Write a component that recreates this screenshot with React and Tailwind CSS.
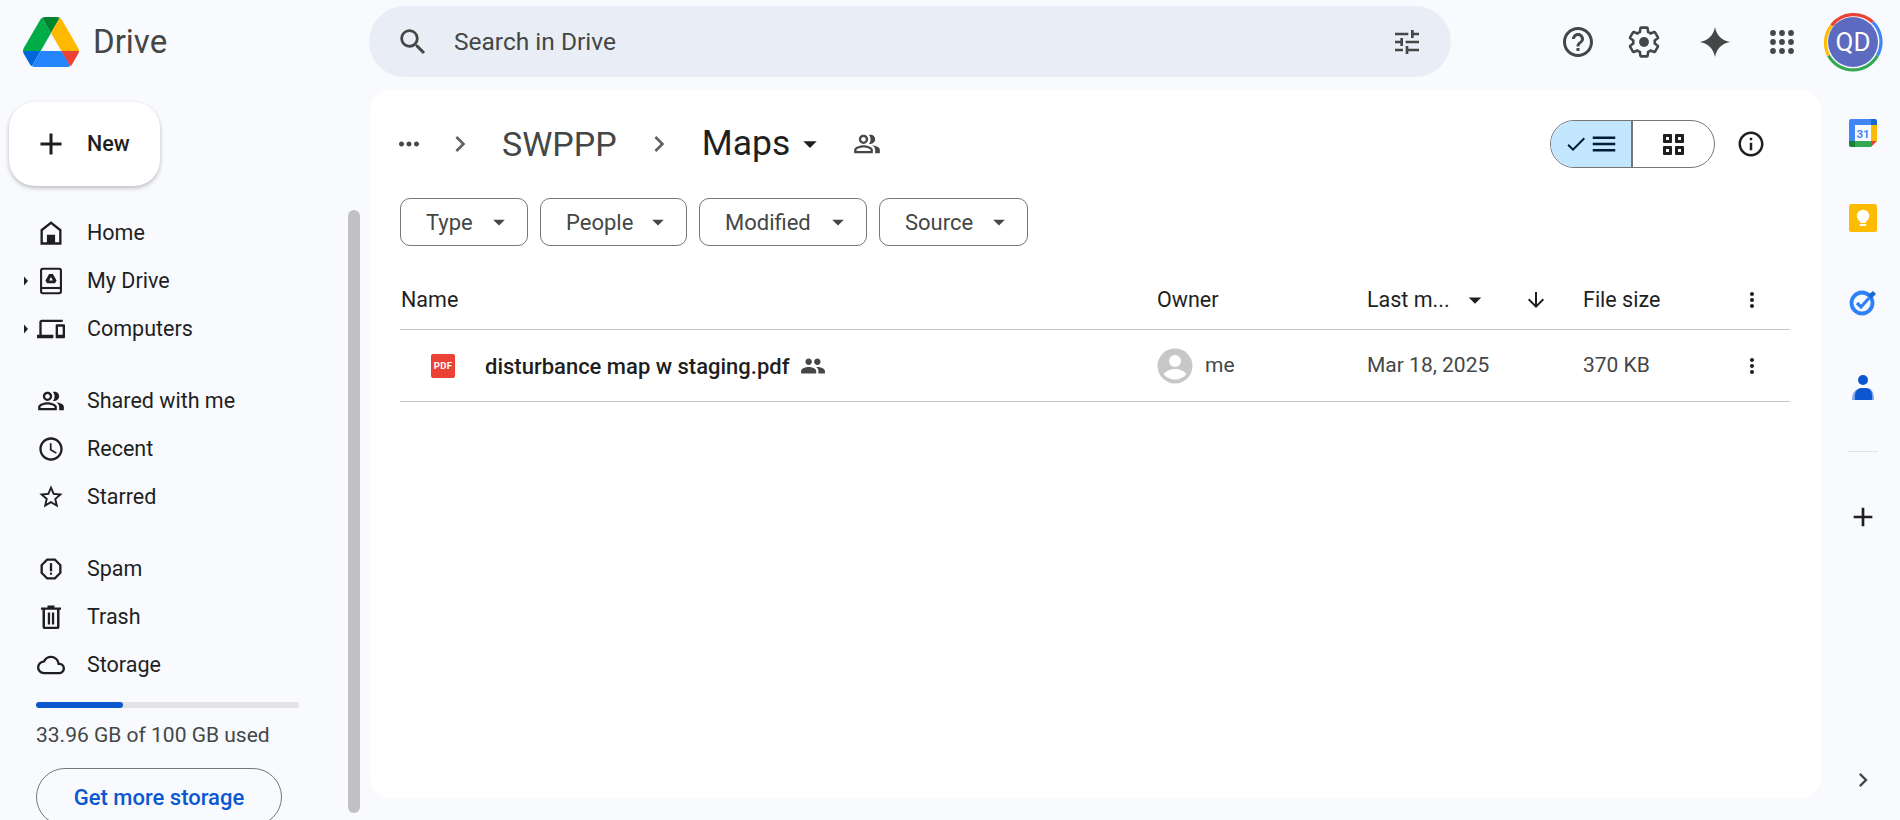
import React from 'react';
import {
  MdAdd, MdSearch, MdTune, MdHelpOutline, MdMoreHoriz, MdChevronRight,
  MdArrowDropDown, MdOutlinePeopleAlt, MdPeople, MdAccessTime, MdStarBorder, MdOutlineReport,
  MdOutlineCloud, MdOutlineDevices, MdInfoOutline, MdCheck, MdMenu, MdMoreVert,
  MdArrowDownward,
} from 'react-icons/md';

const font = 'font-["Roboto","Liberation_Sans",sans-serif]';

const DriveLogo = () => (
  <svg viewBox="0 0 87.3 78" className="w-[56px] h-[50px]">
    <path d="m6.6 66.85 3.85 6.65c.8 1.4 1.95 2.5 3.3 3.3l13.75-23.8h-27.5c0 1.55.4 3.1 1.2 4.5z" fill="#0066da" />
    <path d="m43.65 25-13.75-23.8c-1.35.8-2.5 1.9-3.3 3.3l-25.4 44a9.06 9.06 0 0 0 -1.2 4.5h27.5z" fill="#00ac47" />
    <path d="m73.55 76.8c1.35-.8 2.5-1.9 3.3-3.3l1.6-2.75 7.65-13.25c.8-1.4 1.2-2.95 1.2-4.5h-27.502l5.852 11.5z" fill="#ea4335" />
    <path d="m43.65 25 13.75-23.8c-1.35-.8-2.9-1.2-4.5-1.2h-18.5c-1.6 0-3.15.45-4.5 1.2z" fill="#00832d" />
    <path d="m59.8 53h-32.3l-13.75 23.8c1.35.8 2.9 1.2 4.5 1.2h50.8c1.6 0 3.15-.45 4.5-1.2z" fill="#2684fc" />
    <path d="m73.4 26.5-12.7-22c-.8-1.4-1.95-2.5-3.3-3.3l-13.75 23.8 16.15 28h27.45c0-1.55-.4-3.1-1.2-4.5z" fill="#ffba00" />
  </svg>
);

const HomeIcon = () => (
  <svg viewBox="0 0 24 24" className="w-[28px] h-[28px]" fill="#1f1f1f">
    <path fillRule="evenodd" d="M12 2 3 9v13h18V9L12 2zm0 2.5 7 5.5v10h-3.5v-6.5h-7V20H5V10l7-5.5z" />
  </svg>
);

const MyDriveIcon = () => (
  <svg viewBox="0 0 24 24" className="w-[28px] h-[28px]" fill="none">
    <path d="M5 1.5h14A1.5 1.5 0 0 1 20.5 3v18a1.5 1.5 0 0 1-1.5 1.5H5A1.5 1.5 0 0 1 3.5 21V3A1.5 1.5 0 0 1 5 1.5z" stroke="#1f1f1f" strokeWidth="1.8" />
    <path d="M4 18h16" stroke="#1f1f1f" strokeWidth="1.8" />
    <path fillRule="evenodd" d="M10.4 6h3.2l3.2 5.6-1.4 2.4H8.6l-1.4-2.4L10.4 6zm1.6 2.6-1.6 2.9h3.2L12 8.6z" fill="#1f1f1f" />
  </svg>
);

const TrashIcon = () => (
  <svg viewBox="0 0 28 28" className="w-[28px] h-[28px]" fill="#1f1f1f">
    <path fillRule="evenodd" d="M10.5 2.5h7v2H24v2.3h-1.5V24a2 2 0 0 1-2 2h-13a2 2 0 0 1-2-2V6.8H4V4.5h6.5v-2zM8 6.8v17h12v-17H8z" />
    <path d="M10.8 9.5h2.3v12h-2.3zM14.9 9.5h2.3v12h-2.3z" />
  </svg>
);

const GearIcon = () => (
  <svg viewBox="0 0 24 24" className="w-[36px] h-[36px]" fill="none">
    <path d="M19.14 12.94c.04-.3.06-.61.06-.94 0-.32-.02-.64-.07-.94l2.03-1.58c.18-.14.23-.41.12-.61l-1.92-3.32c-.12-.22-.37-.29-.59-.22l-2.39.96c-.5-.38-1.03-.7-1.62-.94l-.36-2.54c-.04-.24-.24-.41-.48-.41h-3.84c-.24 0-.43.17-.47.41l-.36 2.54c-.59.24-1.13.57-1.62.94l-2.39-.96c-.22-.08-.47 0-.59.22L2.74 8.87c-.12.21-.08.47.12.61l2.03 1.58c-.05.3-.09.63-.09.94s.02.64.07.94l-2.03 1.58c-.18.14-.23.41-.12.61l1.92 3.32c.12.22.37.29.59.22l2.39-.96c.5.38 1.03.7 1.62.94l.36 2.54c.05.24.24.41.48.41h3.84c.24 0 .44-.17.47-.41l.36-2.54c.59-.24 1.13-.56 1.62-.94l2.39.96c.22.08.47 0 .59-.22l1.92-3.32c.12-.22.07-.47-.12-.61l-2.01-1.58z" stroke="#444746" strokeWidth="1.7" />
    <circle cx="12" cy="12" r="3.3" fill="#444746" />
  </svg>
);

const GridIcon = () => (
  <svg viewBox="0 0 21 21" className="w-[21px] h-[21px]" fill="#1f1f1f">
    <path fillRule="evenodd" d="M1 0h7a1 1 0 0 1 1 1v7a1 1 0 0 1-1 1H1a1 1 0 0 1-1-1V1a1 1 0 0 1 1-1zm2 3v3h3V3H3zM13 0h7a1 1 0 0 1 1 1v7a1 1 0 0 1-1 1h-7a1 1 0 0 1-1-1V1a1 1 0 0 1 1-1zm2 3v3h3V3h-3zM1 12h7a1 1 0 0 1 1 1v7a1 1 0 0 1-1 1H1a1 1 0 0 1-1-1v-7a1 1 0 0 1 1-1zm2 3v3h3v-3H3zM13 12h7a1 1 0 0 1 1 1v7a1 1 0 0 1-1 1h-7a1 1 0 0 1-1-1v-7a1 1 0 0 1 1-1zm2 3v3h3v-3h-3z" />
  </svg>
);

const Caret = () => (
  <svg viewBox="0 0 6 10" className="w-[6px] h-[10px]" fill="#1f1f1f"><path d="M1 0.5 5 5 1 9.5z" /></svg>
);

const NavRow = ({ icon, label, caret }) => (
  <div className="flex items-center h-[48px] pl-[23px]">
    <div className="w-[14px] flex items-center">{caret && <Caret />}</div>
    <div className="w-[28px] h-[28px] flex items-center justify-center text-[#1f1f1f]">{icon}</div>
    <span className="ml-[22px] text-[21.5px] text-[#1f1f1f]">{label}</span>
  </div>
);

const Chip = ({ label, width }) => (
  <div className={`${width} h-[48px] flex items-center justify-between pl-[25px] pr-[14px] rounded-[10px] border border-[#747775] text-[22px] text-[#444746]`}>
    <span className="mt-[1px]">{label}</span>
    <MdArrowDropDown size={28} className="text-[#444746]" />
  </div>
);

const Avatar = () => (
  <div className="relative w-[60px] h-[60px] flex items-center justify-center">
    <svg viewBox="0 0 60 60" className="absolute inset-0 w-[60px] h-[60px]" fill="none" strokeWidth="3.2">
      <path d="M8.5 13.5A28 28 0 0 1 49.8 10.2" stroke="#ea4335" />
      <path d="M49.8 10.2A28 28 0 0 1 54.5 43.5" stroke="#4285f4" />
      <path d="M54.5 43.5A28 28 0 0 1 5.5 43.5" stroke="#34a853" />
      <path d="M5.5 43.5A28 28 0 0 1 8.5 13.5" stroke="#fbbc04" />
    </svg>
    <div className="w-[50px] h-[50px] rounded-full bg-[#5c6bc0] flex items-center justify-center text-white text-[26px]">QD</div>
  </div>
);

const CalendarIcon = () => (
  <svg viewBox="0 0 28 28" className="w-[28px] h-[28px]">
    <path d="M2 0h22v6H6v16H0V2a2 2 0 0 1 2-2z" fill="#4285f4" />
    <path d="M22 0h4a2 2 0 0 1 2 2v4h-6z" fill="#1967d2" />
    <path d="M22 6h6v16h-6z" fill="#fbbc04" />
    <path d="M6 22h16v6H6z" fill="#34a853" />
    <path d="M0 22h6v6H2a2 2 0 0 1-2-2z" fill="#188038" />
    <path d="M22 22h6l-6 6z" fill="#ea4335" />
    <text x="14" y="18.6" fontSize="11.5" fontWeight="700" textAnchor="middle" fill="#4285f4" fontFamily="Roboto, sans-serif">31</text>
  </svg>
);

const KeepIcon = () => (
  <svg viewBox="0 0 28 28" className="w-[28px] h-[28px]">
    <rect width="28" height="28" rx="2.5" fill="#ffbb00" />
    <circle cx="14" cy="12" r="6.2" fill="#fff" />
    <rect x="11" y="16.5" width="6" height="2.5" fill="#fff" />
    <rect x="10.8" y="20" width="6.4" height="2" fill="#fff" />
  </svg>
);

const TasksIcon = () => (
  <svg viewBox="0 0 28 28" className="w-[28px] h-[28px]" fill="none">
    <circle cx="13" cy="14" r="10.5" stroke="#2f81f7" strokeWidth="3.8" />
    <path d="M8 14l4 4 8-9" stroke="#2f81f7" strokeWidth="3.2" />
    <path d="M19 6l5-4 3 3-5 5z" fill="#1967d2" />
  </svg>
);

const ContactsIcon = () => (
  <svg viewBox="0 0 28 28" className="w-[28px] h-[28px]">
    <circle cx="14" cy="6" r="5" fill="#0b57d0" />
    <path d="M3 26c0-7 3-12 11-12h3c5 0 8 3 8 12z" fill="#7ba5f0" />
    <path d="M6 26v-4c0-5 3-8 7-8h3c5 0 7 3 7 8v4z" fill="#0b57d0" />
  </svg>
);

const OwnerAvatar = () => (
  <svg viewBox="0 0 36 36" className="w-[36px] h-[36px]">
    <circle cx="18" cy="18" r="17.5" fill="#c7c7c7" />
    <circle cx="18" cy="13" r="6" fill="#fff" />
    <path d="M6.5 26c3-3.5 7-5 11.5-5s8.5 1.5 11.5 5c-2.8 3.6-7 5.5-11.5 5.5S9.3 29.6 6.5 26z" fill="#fff" />
  </svg>
);

const App = () => {
  return (
    <div className={`${font} w-[1900px] h-[820px] overflow-hidden bg-[#f8fafd] flex flex-col`}>
      <header className="h-[90px] flex shrink-0">
        <div className="w-[369px] flex items-start pt-[17px] pl-[23px]">
          <DriveLogo />
          <span className="ml-[14px] text-[33px] leading-[50px] text-[#444746]">Drive</span>
        </div>
        <div className="w-[1082px] h-[71px] mt-[6px] rounded-full bg-[#e9eef6] flex items-center pl-[27px] pr-[28px]">
          <MdSearch size={34} className="text-[#444746]" />
          <span className="ml-[24px] mt-[2px] text-[24.5px] text-[#444746]">Search in Drive</span>
          <MdTune size={32} className="ml-auto text-[#444746]" />
        </div>
        <div className="flex items-start pt-[12px] pl-[109px]">
          <div className="h-[60px] flex items-center">
            <MdHelpOutline size={36} className="text-[#444746]" />
            <div className="ml-[30px]"><GearIcon /></div>
            <svg viewBox="0 0 24 24" className="ml-[34px] w-[38px] h-[38px]" fill="#444746">
              <path d="M12 2.5c.9 5.2 4.3 8.6 9.5 9.5-5.2.9-8.600 4.3-9.5 9.5-.9-5.2-4.3-8.600-9.5-9.5 5.2-.9 8.600-4.3 9.5-9.5z" />
            </svg>
            <svg viewBox="0 0 28 28" className="ml-[34px] w-[28px] h-[28px]" fill="#444746">
              {[5, 14, 23].map(y => [5, 14, 23].map(x => <circle key={`${x}-${y}`} cx={x} cy={y} r="2.9" />))}
            </svg>
            <div className="ml-[27px]"><Avatar /></div>
          </div>
        </div>
      </header>

      <div className="flex flex-1 min-h-0">
        <aside className="w-[370px] shrink-0 flex flex-col">
          <div className="h-[96px] pt-[12px] pl-[9px]">
            <div className="w-[151px] h-[84px] rounded-[26px] bg-white shadow-[0_2px_4px_rgba(0,0,0,0.25)] flex items-center pl-[28px]">
              <MdAdd size={36} className="text-[#1f1f1f] -ml-[4px]" />
              <span className="ml-[18px] text-[21.5px] font-medium text-[#1f1f1f]">New</span>
            </div>
          </div>
          <div className="flex flex-1 min-h-0">
            <div className="w-[348px] pt-[23px]">
              <NavRow icon={<HomeIcon />} label="Home" />
              <NavRow icon={<MyDriveIcon />} label="My Drive" caret />
              <NavRow icon={<MdOutlineDevices size={32} />} label="Computers" caret />
              <div className="h-[24px]" />
              <NavRow icon={<MdOutlinePeopleAlt size={30} />} label="Shared with me" />
              <NavRow icon={<MdAccessTime size={30} />} label="Recent" />
              <NavRow icon={<MdStarBorder size={30} />} label="Starred" />
              <div className="h-[24px]" />
              <NavRow icon={<MdOutlineReport size={30} />} label="Spam" />
              <NavRow icon={<TrashIcon />} label="Trash" />
              <NavRow icon={<MdOutlineCloud size={32} />} label="Storage" />
              <div className="ml-[36px] mt-[13px] w-[263px] h-[6px] rounded-full bg-[#e3e3e3]">
                <div className="w-[87px] h-[6px] rounded-full bg-[#0b57d0]" />
              </div>
              <div className="ml-[36px] mt-[15px] text-[21px] leading-[24px] text-[#444746]">33.96 GB of 100 GB used</div>
              <div className="ml-[36px] mt-[21px] w-[246px] h-[58px] rounded-full border border-[#747775] flex items-center justify-center text-[#0b57d0] text-[22px] font-medium">Get more storage</div>
            </div>
            <div className="w-[12px] h-[603px] mt-[24px] rounded-full bg-[#c1c1c1]" />
          </div>
        </aside>

        <main className="w-[1451px] h-[708px] shrink-0 rounded-[20px] bg-white pt-[30px] pl-[30px] pr-[31px]">
          <div className="h-[48px] flex items-center">
            <MdMoreHoriz size={30} className="-ml-[6px] text-[#444746]" />
            <MdChevronRight size={32} className="ml-[20px] text-[#5f6368]" />
            <span className="ml-[26px] text-[34px] text-[#444746]">SWPPP</span>
            <MdChevronRight size={32} className="ml-[26px] text-[#5f6368]" />
            <span className="ml-[27px] text-[35.5px] text-[#1f1f1f]">Maps</span>
            <MdArrowDropDown size={32} className="ml-[4px] text-[#1f1f1f]" />
            <MdOutlinePeopleAlt size={28} className="ml-[27px] text-[#444746]" />
            <div className="ml-auto flex items-center">
              <div className="w-[165px] h-[48px] rounded-full border border-[#747775] flex overflow-hidden">
                <div className="w-[82px] bg-[#c2e7ff] border-r-2 border-[#747775] flex items-center justify-center text-[#001d35]">
                  <MdCheck size={24} />
                  <MdMenu size={30} className="ml-[1px]" />
                </div>
                <div className="flex-1 flex items-center justify-center">
                  <GridIcon />
                </div>
              </div>
              <MdInfoOutline size={30} className="ml-[21px] mr-[24px] text-[#1f1f1f]" />
            </div>
          </div>

          <div className="mt-[30px] flex gap-[12px]">
            <Chip label="Type" width="w-[128px]" />
            <Chip label="People" width="w-[147px]" />
            <Chip label="Modified" width="w-[168px]" />
            <Chip label="Source" width="w-[149px]" />
          </div>

          <div className="grid grid-cols-[757px_210px_216px_1fr] h-[84px] pt-[38px] border-b border-[#c7c7c7] text-[21.5px] font-normal text-[#1f1f1f] items-start w-[1390px]">
            <div className="leading-[32px] pl-[1px]">Name</div>
            <div className="leading-[32px]">Owner</div>
            <div className="leading-[32px] flex items-center">
              <span>Last m...</span>
              <MdArrowDropDown size={30} className="ml-[10px]" />
              <MdArrowDownward size={24} className="ml-[34px]" />
            </div>
            <div className="leading-[32px] flex items-center">
              <span>File size</span>
              <MdMoreVert size={24} className="ml-auto mr-[26px]" />
            </div>
          </div>

          <div className="grid grid-cols-[757px_210px_216px_1fr] h-[72px] pt-[1px] border-b border-[#c7c7c7] items-center text-[21px] text-[#444746] w-[1390px]">
            <div className="flex items-center pl-[31px]">
              <div className="w-[24px] h-[24px] rounded-[2px] bg-[#ea4335] flex items-center justify-center text-white text-[9.5px] font-bold tracking-[0.3px]">PDF</div>
              <span className="ml-[30px] text-[22px] font-medium text-[#1f1f1f]">disturbance map w staging.pdf</span>
              <MdPeople size={26} className="ml-[11px] text-[#444746]" />
            </div>
            <div className="flex items-center">
              <OwnerAvatar />
              <span className="ml-[12px]">me</span>
            </div>
            <div>Mar 18, 2025</div>
            <div className="flex items-center">
              <span>370 KB</span>
              <MdMoreVert size={24} className="ml-auto mr-[26px] text-[#1f1f1f]" />
            </div>
          </div>
        </main>

        <div className="w-[79px] shrink-0 flex flex-col items-center pl-[5px] pb-[26px]">
          <div className="h-[85px] flex items-center"><CalendarIcon /></div>
          <div className="h-[85px] flex items-center"><KeepIcon /></div>
          <div className="h-[85px] flex items-center"><TasksIcon /></div>
          <div className="h-[85px] flex items-center"><ContactsIcon /></div>
          <div className="mt-[21px] w-[30px] h-px bg-[#e3e3e3]" />
          <MdAdd size={32} className="mt-[49px] text-[#1f1f1f]" />
          <MdChevronRight size={28} className="mt-auto text-[#444746]" />
        </div>
      </div>
    </div>
  );
};

export default App;
